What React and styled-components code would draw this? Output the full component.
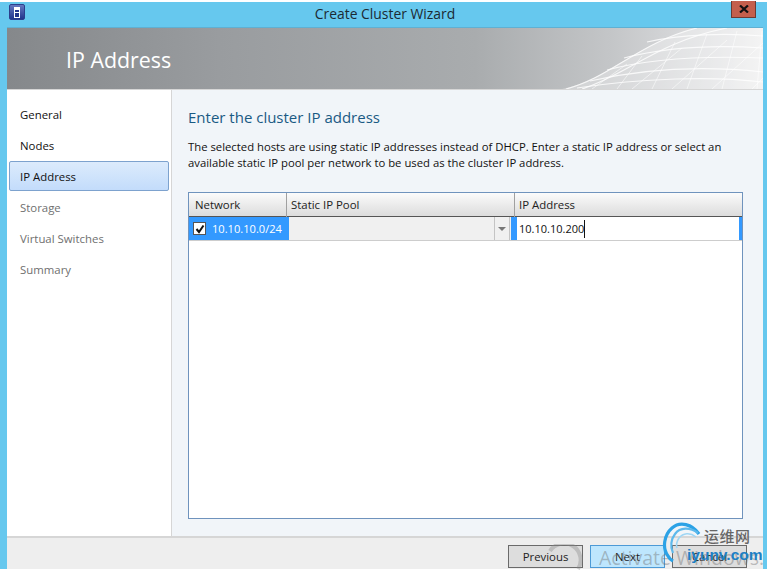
import React from "react";
import styled, { createGlobalStyle } from "styled-components";

const GlobalStyle = createGlobalStyle`
  html, body {
    margin: 0;
    padding: 0;
    background: #ffffff;
  }
  * {
    box-sizing: border-box;
  }
`;

const Wizard = styled.div`
  position: relative;
  width: 767px;
  height: 570px;
  padding-top: 2px;
  overflow: hidden;
  display: flex;
  flex-direction: column;
  background: #ffffff;
  font-family: "Open Sans", "Noto Sans", sans-serif;
  font-size: 11.4px;
  color: #1a1a1a;
`;

const TitleBar = styled.div`
  height: 25px;
  flex: none;
  display: flex;
  align-items: flex-start;
  padding-left: 9px;
  padding-right: 11px;
  background: #66c8ee;
`;

const AppIcon = styled.div`
  width: 16px;
  height: 16px;
  margin-top: 2px;
  flex: none;
  display: flex;
  align-items: center;
  justify-content: center;
  border-radius: 2px;
  border: 1px solid #2c3f8c;
  background: linear-gradient(#6478c0, #22358c);
`;

const AppIconInner = styled.div`
  width: 6px;
  height: 11px;
  border: 1px solid #ffffff;
  background: linear-gradient(#ffffff 0 2px, #22358c 2px 4px, #ffffff 4px 5px, #22358c 5px);
`;

const WindowTitle = styled.div`
  flex: 1;
  height: 23px;
  padding-left: 14px;
  line-height: 23px;
  text-align: center;
  font-size: 13.9px;
  color: #1c2a33;
`;

const CloseButton = styled.div`
  width: 25px;
  height: 17px;
  flex: none;
  margin-top: -1px;
  display: flex;
  align-items: center;
  justify-content: center;
  background: #c45f4c;
  border: 1px solid #6e3a32;
  border-top: none;
`;

const Frame = styled.div`
  flex: 1;
  display: flex;
  flex-direction: column;
  min-height: 0;
  margin-left: 7px;
  margin-right: 4px;
  margin-bottom: 1px;
  border-top: 1px solid #5fb0d2;
  box-shadow: -7px 0 0 #66c8ee, 4px 0 0 #66c8ee;
`;

const Banner = styled.div`
  position: relative;
  height: 62px;
  flex: none;
  display: flex;
  align-items: center;
  padding: 2px 0 0 59px;
  overflow: hidden;
  border-bottom: 1px solid #d6d6d6;
  background: linear-gradient(90deg, #85888b 0%, #999c9f 28%, #a9acae 62%, #c4c6c8 80%, #dcdddf 92%, #eeeeee 100%);
`;

const BannerTitle = styled.div`
  font-size: 21.4px;
  color: #ffffff;
`;

const Mesh = styled.svg`
  position: absolute;
  top: 0;
  right: 0;
`;

const Main = styled.div`
  flex: 1;
  min-height: 0;
  display: flex;
`;

const Sidebar = styled.div`
  width: 165px;
  flex: none;
  display: flex;
  flex-direction: column;
  gap: 1px;
  padding: 9px 2px 0;
  background: #ffffff;
  border-right: 1px solid #d6d6d6;
`;

const StepItem = styled.div`
  height: 30px;
  line-height: 30px;
  padding-left: 10px;
  border: 1px solid ${(p) => (p.$active ? "#7da2ce" : "transparent")};
  border-radius: 2px;
  color: ${(p) => (p.$disabled ? "#6f6f6f" : "#111111")};
  background: ${(p) =>
    p.$active ? "linear-gradient(#dcebfc, #c3dcfb)" : "transparent"};
`;

const Content = styled.div`
  flex: 1;
  min-width: 0;
  display: flex;
  flex-direction: column;
  padding: 17px 20px 17px 16px;
  background: #f1f5f9;
`;

const Heading = styled.div`
  font-size: 15px;
  line-height: 20px;
  color: #1a5a84;
`;

const Description = styled.p`
  margin: 12px 0 0;
  line-height: 16px;
  font-size: 11.3px;
  color: #111111;
`;

const Grid = styled.div`
  flex: 1;
  margin-top: 21px;
  background: #ffffff;
  border: 1px solid #6f93bd;
`;

const HeaderRow = styled.div`
  height: 24px;
  display: grid;
  grid-template-columns: 98px 228px 1fr;
  border-bottom: 1px solid #555555;
  background: linear-gradient(#fbfbfb, #dcdcdc);
`;

const HeaderCell = styled.div`
  line-height: 24px;
  padding-left: ${(p) => (p.$first ? "6px" : "4px")};
  border-right: ${(p) => (p.$last ? "none" : "1px solid #a0a0a0")};
  color: #222222;
`;

const DataRow = styled.div`
  height: 24px;
  display: grid;
  grid-template-columns: 100px 1fr 231px;
  border-bottom: 1px solid #cdcdcd;
`;

const NetworkCell = styled.div`
  display: flex;
  align-items: center;
  gap: 6px;
  padding-left: 4px;
  font-size: 11.1px;
  color: #ffffff;
  background: #3399ff;
`;

const CheckBox = styled.div`
  width: 13px;
  height: 13px;
  flex: none;
  display: flex;
  align-items: center;
  justify-content: center;
  background: #ffffff;
  border: 1px solid #555555;
`;

const PoolCell = styled.div`
  display: flex;
  justify-content: flex-end;
  padding-right: 1px;
  background: #f0f0f0;
`;

const ComboArrow = styled.div`
  width: 16px;
  display: flex;
  align-items: center;
  justify-content: center;
  border-left: 1px solid #c4c4c4;
  border-right: 1px solid #c4c4c4;
`;

const ArrowShape = styled.div`
  width: 0;
  height: 0;
  border-left: 4px solid transparent;
  border-right: 4px solid transparent;
  border-top: 4px solid #777777;
`;

const AddressCell = styled.div`
  display: flex;
  align-items: center;
  padding-left: 2px;
  font-size: 11px;
  color: #111111;
  background: #ffffff;
  border-left: 6px solid #3399ff;
  border-right: 3px solid #3399ff;
`;

const Caret = styled.span`
  width: 1px;
  height: 18px;
  background: #111111;
`;

const Footer = styled.div`
  height: 33px;
  flex: none;
  display: flex;
  justify-content: flex-end;
  gap: 7px;
  padding: 7px 16px 0 0;
  background: #eeeeee;
  border-top: 2px solid #d6d6d6;
`;

const FooterButton = styled.div`
  width: 75px;
  height: 23px;
  line-height: 21px;
  text-align: center;
  color: #222222;
  border: 1px solid ${(p) => (p.$primary ? "#4d9ad6" : "#6a6a6a")};
  background: ${(p) => (p.$primary ? "#bee6fd" : "#dddddd")};
`;

const ActivateRing = styled.svg`
  position: absolute;
  left: 540px;
  top: 544px;
`;

const ActivateMark = styled.div`
  position: absolute;
  left: 599px;
  top: 544px;
  font-size: 19.5px;
  white-space: nowrap;
  color: rgba(110, 110, 110, 0.42);
`;

const SiteLogo = styled.svg`
  position: absolute;
  left: 662px;
  top: 520px;
`;

const SiteName = styled.div`
  position: absolute;
  left: 704px;
  top: 525px;
  font-family: "Noto Sans CJK SC", sans-serif;
  font-size: 15px;
  font-weight: 500;
  letter-spacing: 0.5px;
  color: #666666;
`;

const SiteUrl = styled.div`
  position: absolute;
  left: 687px;
  top: 546px;
  font-family: "Liberation Sans", sans-serif;
  font-size: 15.5px;
  font-weight: 700;
  color: #1d80c4;
`;

const steps = [
  { label: "General" },
  { label: "Nodes" },
  { label: "IP Address", active: true },
  { label: "Storage", disabled: true },
  { label: "Virtual Switches", disabled: true },
  { label: "Summary", disabled: true },
];

export default function App() {
  return (
    <Wizard>
      <GlobalStyle />
      <TitleBar>
        <AppIcon>
          <AppIconInner />
        </AppIcon>
        <WindowTitle>Create Cluster Wizard</WindowTitle>
        <CloseButton>
          <svg width="10" height="8" viewBox="0 0 10 8">
            <path d="M1 0.5 L9 7.5 M9 0.5 L1 7.5" stroke="#111" strokeWidth="2.2" />
          </svg>
        </CloseButton>
      </TitleBar>
      <Frame>
        <Banner>
          <BannerTitle>IP Address</BannerTitle>
          <Mesh width="201" height="61" viewBox="0 0 201 61" fill="none">
            <path d="M0 61 C45 52 75 15 135 0 L201 0 L201 61 Z" fill="#ffffff" fillOpacity="0.32" />
            <g stroke="#ffffff" strokeOpacity="0.8" strokeWidth="1.2">
              <path d="M4 61 C48 50 78 14 135 0" />
              <path d="M20 61 C65 47 95 14 165 0" />
              <path d="M85 14 C120 6 165 5 201 8" />
              <path d="M62 30 C105 19 155 17 201 20" />
              <path d="M45 42 C90 30 150 28 201 30" />
              <path d="M28 53 C85 40 145 38 201 44" />
              <path d="M15 60 C80 50 150 48 201 54" />
            </g>
            <g stroke="#ffffff" strokeOpacity="0.55" strokeWidth="1">
              <path d="M55 61 L80 28 M90 61 L113 14 M125 61 L145 6 M160 61 L175 3 M195 61 L200 3" />
              <path d="M30 61 L65 36 M70 61 L120 20 M110 61 L165 12 M150 61 L201 15 M190 61 L201 50" />
            </g>
          </Mesh>
        </Banner>
        <Main>
          <Sidebar>
            {steps.map((step) => (
              <StepItem key={step.label} $active={step.active} $disabled={step.disabled}>
                {step.label}
              </StepItem>
            ))}
          </Sidebar>
          <Content>
            <Heading>Enter the cluster IP address</Heading>
            <Description>
              The selected hosts are using static IP addresses instead of DHCP. Enter a static IP address or select an
              <br />
              available static IP pool per network to be used as the cluster IP address.
            </Description>
            <Grid>
              <HeaderRow>
                <HeaderCell $first>Network</HeaderCell>
                <HeaderCell>Static IP Pool</HeaderCell>
                <HeaderCell $last>IP Address</HeaderCell>
              </HeaderRow>
              <DataRow>
                <NetworkCell>
                  <CheckBox>
                    <svg width="10" height="10" viewBox="0 0 10 10" fill="none">
                      <path d="M1.5 5 L4 8 L8.5 1.5" stroke="#111" strokeWidth="2" />
                    </svg>
                  </CheckBox>
                  10.10.10.0/24
                </NetworkCell>
                <PoolCell>
                  <ComboArrow>
                    <ArrowShape />
                  </ComboArrow>
                </PoolCell>
                <AddressCell>
                  10.10.10.200
                  <Caret />
                </AddressCell>
              </DataRow>
            </Grid>
          </Content>
        </Main>
        <Footer>
          <FooterButton>Previous</FooterButton>
          <FooterButton $primary>Next</FooterButton>
          <FooterButton>Cancel</FooterButton>
        </Footer>
      </Frame>
      <ActivateRing width="44" height="26" viewBox="0 0 44 26" fill="none">
        <path d="M10 7 A16 16 0 0 1 38 25" stroke="#8a8a8a" strokeOpacity="0.38" strokeWidth="4" />
      </ActivateRing>
      <ActivateMark>Activate Windows.</ActivateMark>
      <SiteLogo width="50" height="50" viewBox="0 0 50 50" fill="none">
        <path d="M37 14 C30 4 18 1 10 8 C2 15 0 28 6 36 C7 38 9 40 11 41" stroke="#2ba2e6" strokeWidth="3.2" />
        <path d="M36 13 C28 7 18 7 13 14 C9 19 8 27 11 33" stroke="#5cb9ec" strokeWidth="2.2" />
        <path d="M34 17 C28 12 21 13 17 18 C15 21 14 25 15 28" stroke="#9fd6f4" strokeWidth="1.6" />
      </SiteLogo>
      <SiteName>运维网</SiteName>
      <SiteUrl>iyunv.com</SiteUrl>
    </Wizard>
  );
}
